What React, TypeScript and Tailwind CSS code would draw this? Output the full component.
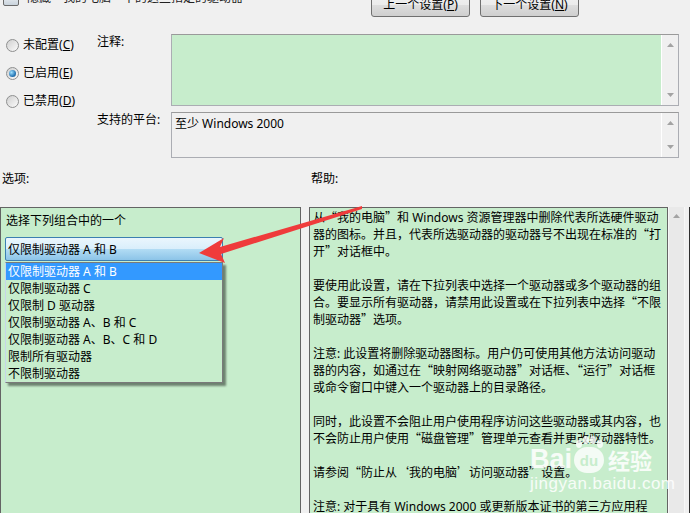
import React from "react";

const helpParas: string[][] = [
  [
    "从“我的电脑”和 Windows 资源管理器中删除代表所选硬件驱动",
    "器的图标。并且，代表所选驱动器的驱动器号不出现在标准的“打",
    "开”对话框中。",
  ],
  [
    "要使用此设置，请在下拉列表中选择一个驱动器或多个驱动器的组",
    "合。要显示所有驱动器，请禁用此设置或在下拉列表中选择“不限",
    "制驱动器”选项。",
  ],
  [
    "注意: 此设置将删除驱动器图标。用户仍可使用其他方法访问驱动",
    "器的内容，如通过在“映射网络驱动器”对话框、“运行”对话框",
    "或命令窗口中键入一个驱动器上的目录路径。",
  ],
  [
    "同时，此设置不会阻止用户使用程序访问这些驱动器或其内容，也",
    "不会防止用户使用“磁盘管理”管理单元查看并更改驱动器特性。",
  ],
  ["请参阅“防止从‘我的电脑’访问驱动器”设置。"],
  ["注意: 对于具有 Windows 2000 或更新版本证书的第三方应用程"],
];

const options = [
  "仅限制驱动器 A 和 B",
  "仅限制驱动器 C",
  "仅限制 D 驱动器",
  "仅限制驱动器 A、B 和 C",
  "仅限制驱动器 A、B、C 和 D",
  "限制所有驱动器",
  "不限制驱动器",
];

// CJK quotes are full width in the original font, so take them from the CJK family
function Q({ text }: { text: string }) {
  const parts = text.split(/([“”‘’])/);
  return (
    <>
      {parts.map((p, i) =>
        /^[“”‘’]$/.test(p) ? (
          <span key={i} className="font-['Noto_Sans_CJK_SC',sans-serif] leading-none">
            {p}
          </span>
        ) : (
          p
        )
      )}
    </>
  );
}

function Tri({ up }: { up?: boolean }) {
  return (
    <svg width="7" height="4" viewBox="0 0 7 4" className="block">
      <path d={up ? "M0 4 L3.5 0 L7 4 Z" : "M0 0 L3.5 4 L7 0 Z"} fill="#a3a3a3" />
    </svg>
  );
}

function Radio({ checked }: { checked?: boolean }) {
  return (
    <span className="flex h-[13px] w-[13px] items-center justify-center rounded-full border border-[#8e8f8f] bg-[linear-gradient(135deg,#cfcfcf,#fbfbfb)]">
      {checked && (
        <span className="h-[7px] w-[7px] rounded-full bg-[radial-gradient(circle_at_35%_35%,#9ee0ff,#2a7ab8_60%,#0f4a7a)]" />
      )}
    </span>
  );
}

function WinButton({ label, mnemonic }: { label: string; mnemonic: string }) {
  return (
    <div className="flex h-[24px] w-[99px] items-center justify-center rounded-[3px] border border-[#707070] bg-[linear-gradient(to_bottom,#f2f2f2,#ebebeb_50%,#dddddd_51%,#cfcfcf)] text-[12px] leading-[16px] text-black">
      {label}(<span className="underline">{mnemonic}</span>)
    </div>
  );
}

function ScrollCol({ className }: { className?: string }) {
  return (
    <div className={`flex w-[17px] flex-col items-center justify-between py-[8px] ${className ?? ""}`}>
      <Tri up />
      <Tri />
    </div>
  );
}

export default function App() {
  return (
    <div className="relative h-[513px] w-[690px] overflow-hidden bg-[#f0f0f0] font-['Noto_Sans','Noto_Sans_CJK_SC',sans-serif] text-[12px] text-black">
      {/* title bar, cut off at top */}
      <div className="flex h-[18px] items-end overflow-hidden">
        <div className="mb-[12px] ml-[3px] h-[16px] w-[16px] rounded-[2px] border border-[#6a6a6a] bg-[linear-gradient(to_bottom,#ffffff,#c9d3dc)]" />
        <div className="mb-[12px] ml-[8px] h-[16px] leading-[16px] text-[#222]">
          <Q text="隐藏“我的电脑”中的这些指定的驱动器" />
        </div>
        <div className="mb-[1px] ml-auto mr-[111px] flex gap-[10px]">
          <WinButton label="上一个设置" mnemonic="P" />
          <WinButton label="下一个设置" mnemonic="N" />
        </div>
      </div>

      {/* state + comment + platform */}
      <div className="mt-[16px] flex">
        <div className="flex w-[97px] flex-col gap-[14px] pl-[6px] pt-[4px]">
          {[
            { t: "未配置", m: "C" },
            { t: "已启用", m: "E", on: true },
            { t: "已禁用", m: "D" },
          ].map((r) => (
            <div key={r.m} className="flex h-[14px] items-center gap-[4px] leading-[14px]">
              <Radio checked={r.on} />
              <span>
                {r.t}(<span className="underline">{r.m}</span>)
              </span>
            </div>
          ))}
        </div>
        <div className="flex w-[582px] flex-col">
          <div className="flex">
            <div className="w-[74px] leading-[15px]">注释:</div>
            <div className="flex h-[72px] flex-1 border border-[#abadb3] border-t-[#9a9a9a]">
              <div className="flex-1 bg-[#c7edcc]" />
              <ScrollCol className="border-l border-white bg-[#f0f0f0]" />
            </div>
          </div>
          <div className="mt-[6px] flex">
            <div className="w-[74px] pt-[1px] leading-[13px]">支持的平台:</div>
            <div className="flex h-[46px] flex-1 border border-[#abadb3] border-t-[#9a9a9a]">
              <div className="flex-1 pl-[3px] pt-[2px] leading-[17px]">至少 Windows 2000</div>
              <ScrollCol className="border-l border-white bg-[#f0f0f0]" />
            </div>
          </div>
        </div>
      </div>

      {/* section labels */}
      <div className="mt-[12px] flex leading-[17px]">
        <div className="w-[309px] pl-[2px]">选项:</div>
        <div className="pl-[2px]">帮助:</div>
      </div>

      {/* panes */}
      <div className="mt-[20px] flex h-[320px]">
        <div className="w-[301px] border border-[#646464] bg-[#c7edcc]">
          <div className="pl-[5px] pt-[4px] leading-[17px]">选择下列组合中的一个</div>
          <div className="relative ml-[4px] mt-[8px] w-[218px]">
            <div className="flex h-[24px] items-center rounded-[2px] border border-[#3c7fb1] bg-[linear-gradient(to_bottom,#eaf6fd,#d9eefb_50%,#b2dcf4_51%,#8cc4e8)] pl-[2px] leading-[17px]">
              仅限制驱动器 A 和 B
            </div>
            <div className="absolute left-0 top-full mt-[1px] w-[218px] border border-[#7a7a7a] border-l-[#c7d4e8] bg-[#c7edcc] shadow-[3px_3px_2px_rgba(0,0,0,0.45)]">
              {options.map((o, i) => (
                <div
                  key={o}
                  className={`h-[17px] whitespace-nowrap pl-[2px] leading-[17px] ${i === 0 ? "bg-[#3399ff] text-white" : ""}`}
                >
                  {o}
                </div>
              ))}
            </div>
          </div>
        </div>
        <div className="ml-[8px] w-[359px] overflow-hidden border border-[#646464] bg-[#c7edcc] pl-[3px] pt-[1px] leading-[17px]">
          {helpParas.map((p, i) => (
            <div key={i} className="mb-[17px] whitespace-nowrap">
              {p.map((l) => (
                <div key={l} className="h-[17px]">
                  <Q text={l} />
                </div>
              ))}
            </div>
          ))}
        </div>
        <div className="flex w-[17px] flex-col items-center border-x border-[#f7f7f7] bg-[#e9e9e9] pt-[7px]">
          <Tri up />
        </div>
        <div className="w-[4px]" />
        <div className="w-[1px] bg-[#2f2f2f]" />
      </div>

      {/* red annotation arrow */}
      <svg className="pointer-events-none absolute left-0 top-0" width="690" height="513" viewBox="0 0 690 513">
        <polygon
          points="199,253 224,238 220,247 362,206 362,209 221,254 225,263"
          fill="#ef3b3b"
        />
      </svg>

      {/* watermark */}
      <div className="pointer-events-none absolute left-[530px] top-[444px] flex flex-col text-white/85">
        <div className="flex items-end">
          <span className="font-['Liberation_Sans',sans-serif] text-[27px] font-bold leading-[30px]">Bai</span>
          <span className="relative mb-[1px] ml-[2px] flex h-[26px] w-[30px] items-center justify-center rounded-full bg-white/80 font-['Liberation_Sans',sans-serif] text-[15px] font-bold leading-[15px] text-[#c7edcc]">
            du
            <svg className="absolute -top-[12px] left-[1px]" width="28" height="14" viewBox="0 0 28 14">
              <ellipse cx="4" cy="9" rx="3" ry="4" fill="white" fillOpacity="0.8" />
              <ellipse cx="11" cy="5" rx="3" ry="4" fill="white" fillOpacity="0.8" />
              <ellipse cx="18" cy="5" rx="3" ry="4" fill="white" fillOpacity="0.8" />
              <ellipse cx="25" cy="9" rx="3" ry="4" fill="white" fillOpacity="0.8" />
            </svg>
          </span>
          <span className="ml-[4px] text-[22px] font-bold leading-[28px]">经验</span>
        </div>
        <span className="font-['Liberation_Sans',sans-serif] text-[17px] leading-[20px] tracking-[0.5px]">jingyan.baidu.com</span>
      </div>
    </div>
  );
}
